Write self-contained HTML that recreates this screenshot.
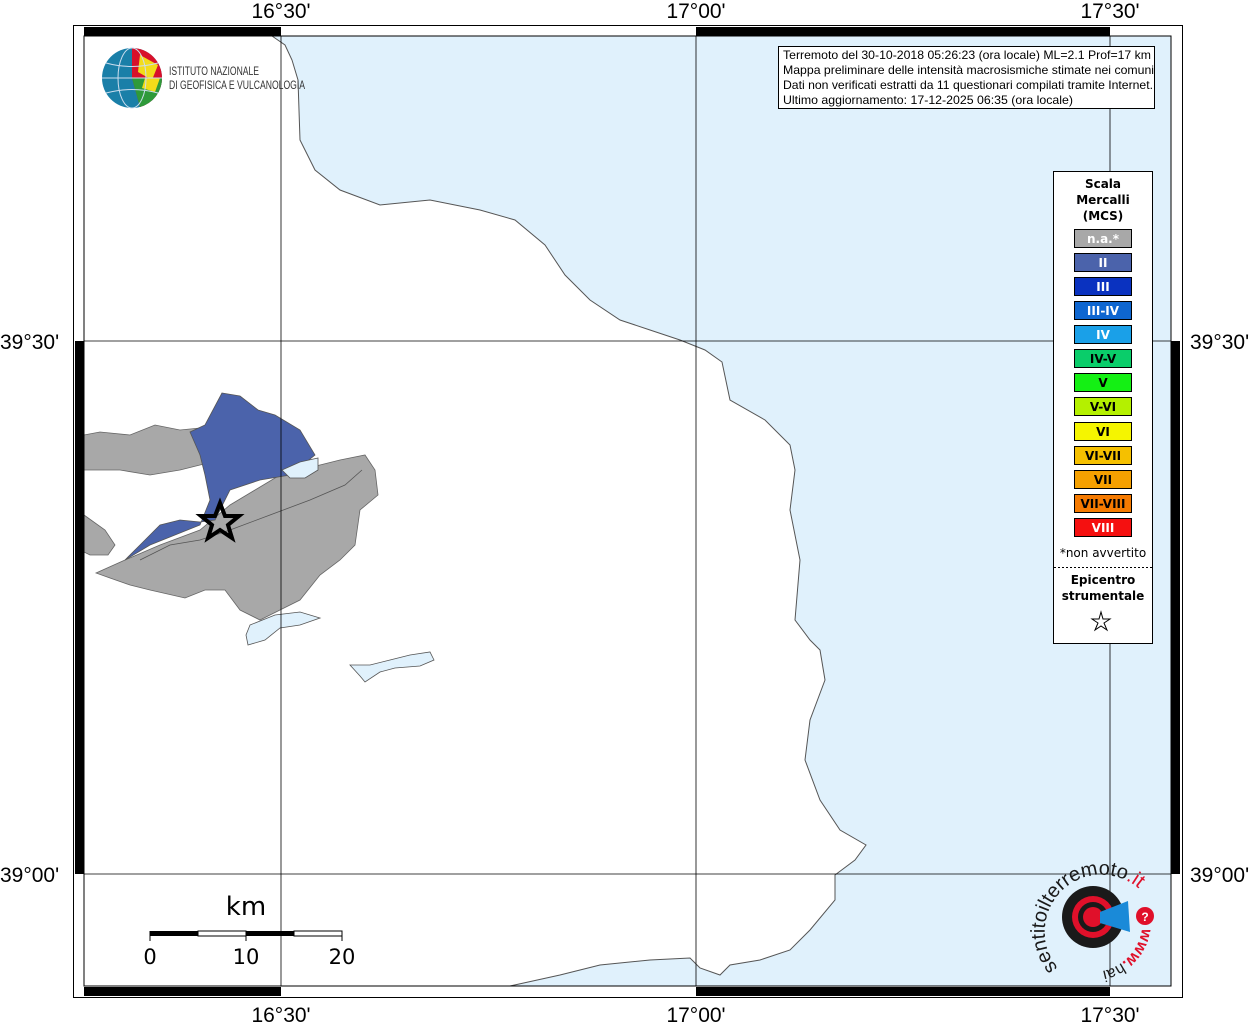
<!DOCTYPE html>
<html><head><meta charset="utf-8"><style>
body{margin:0;width:1255px;height:1024px;background:#fff;overflow:hidden;font-family:"Liberation Sans","DejaVu Sans",sans-serif}
svg{position:absolute;left:0;top:0}
.lbl{font-family:"Liberation Sans",sans-serif;font-size:21px;fill:#000}
.lg{font-family:"DejaVu Sans",sans-serif;font-size:12px;font-weight:bold;text-anchor:middle}
</style></head><body>
<svg width="1255" height="1024" viewBox="0 0 1255 1024">
<polygon fill="#e0f1fc" stroke="#555" stroke-width="1" points="272,36 285,45 292,60 298,80 300,140 315,170 340,190 380,205 430,200 480,210 515,220 545,245 565,275 590,300 620,320 650,330 680,340 705,350 722,362 730,400 765,420 790,445 795,470 790,510 800,560 795,620 810,640 820,650 825,680 810,720 805,760 820,800 840,830 866,845 855,860 835,875 835,900 810,930 790,950 760,960 730,965 720,975 700,968 690,958 650,960 600,965 560,975 510,986 1171,986 1171,36"/>
<g fill="#a8a8a8" stroke="#666" stroke-width="0.8">
<path d="M84,435 L100,432 130,435 155,425 180,430 200,428 220,460 180,470 150,475 120,470 84,470Z"/>
<path d="M84,515 L105,530 115,545 108,555 90,555 84,552Z"/>
<path d="M96,573 L125,560 160,545 200,530 230,505 280,475 340,460 365,455 375,470 378,495 360,510 355,545 340,560 320,575 300,600 280,610 260,620 240,610 225,590 205,590 185,598 150,590 130,585 110,578Z"/>
</g>
<path fill="#4b63ab" stroke="#555" stroke-width="0.8" d="M222,393 L240,396 258,410 275,415 300,430 315,455 290,475 260,480 230,490 215,520 200,522 180,520 160,525 140,545 125,560 150,545 200,525 210,500 205,475 200,455 190,432 205,425Z"/>
<path fill="#e0f1fc" stroke="#555" stroke-width="0.8" d="M282,470 L300,462 318,458 318,470 305,478 290,478Z"/>
<path fill="#e0f1fc" stroke="#555" stroke-width="0.8" d="M250,625 L275,615 300,612 320,618 300,625 280,628 265,640 248,645 246,635Z"/>
<path fill="#e0f1fc" stroke="#555" stroke-width="0.8" d="M350,665 L370,665 390,660 410,655 430,652 434,660 420,666 395,668 380,672 365,682 360,676Z"/>
<path fill="none" stroke="#555" stroke-width="0.8" d="M140,560 L170,545 200,540 230,530 270,515 310,500 345,485 362,470"/>
<polygon fill="none" stroke="#000" stroke-width="4" points="220,503 225,516 239,516 228,525 232,538 220,530 208,538 212,525 201,516 215,516"/>
<g stroke="#000" stroke-width="0.8">
<line x1="281" y1="36" x2="281" y2="986"/><line x1="696" y1="36" x2="696" y2="986"/><line x1="1110" y1="36" x2="1110" y2="986"/>
<line x1="84" y1="341" x2="1171" y2="341"/><line x1="84" y1="874" x2="1171" y2="874"/>
</g>
<rect x="73.5" y="25.5" width="1109" height="972" fill="none" stroke="#000"/>
<rect x="84" y="36" width="1087" height="950" fill="none" stroke="#000"/>
<g fill="#000">
<rect x="84" y="27" width="197" height="9"/><rect x="696" y="27" width="414" height="9"/>
<rect x="84" y="987" width="197" height="9"/><rect x="696" y="987" width="414" height="9"/>
<rect x="75" y="341" width="9" height="533"/><rect x="1171" y="341" width="9" height="533"/>
</g>
<g class="lbl">
<text x="281" y="18" text-anchor="middle">16°30'</text><text x="696" y="18" text-anchor="middle">17°00'</text><text x="1110" y="18" text-anchor="middle">17°30'</text>
<text x="281" y="1022" text-anchor="middle">16°30'</text><text x="696" y="1022" text-anchor="middle">17°00'</text><text x="1110" y="1022" text-anchor="middle">17°30'</text>
<text x="0" y="349">39°30'</text><text x="0" y="882">39°00'</text>
<text x="1190" y="349">39°30'</text><text x="1190" y="882">39°00'</text>
</g>
<circle cx="132" cy="78" r="30" fill="#1a7fa8"/>
<path d="M132,48 A30,30 0 0 1 162,78 A30,30 0 0 1 140,107 L132,78Z" fill="#d8102a"/>
<path d="M140,55 L158,65 152,80 138,72Z" fill="#f2dc1a"/>
<path d="M132,78 L162,78 A30,30 0 0 1 140,107Z" fill="#2e9a3a"/>
<path d="M145,78 L160,78 155,92 142,88Z" fill="#f2dc1a"/>
<g stroke="#cde" stroke-width="1" fill="none"><ellipse cx="132" cy="78" rx="14" ry="30"/><line x1="102" y1="78" x2="162" y2="78"/><path d="M106,63 Q132,70 158,63"/><path d="M106,93 Q132,86 158,93"/></g>
<text x="169" y="75" font-family="Liberation Sans Narrow,Liberation Sans,sans-serif" font-size="12" fill="#333" textLength="90" lengthAdjust="spacingAndGlyphs">ISTITUTO NAZIONALE</text>
<text x="169" y="89" font-family="Liberation Sans Narrow,Liberation Sans,sans-serif" font-size="12" fill="#333" textLength="136" lengthAdjust="spacingAndGlyphs">DI GEOFISICA E VULCANOLOGIA</text>
<rect x="778.5" y="46.5" width="376" height="62" fill="#fff" stroke="#000"/>
<g font-family="Liberation Sans,sans-serif" font-size="12" fill="#000" lengthAdjust="spacingAndGlyphs">
<text x="783" y="59" textLength="368" lengthAdjust="spacingAndGlyphs">Terremoto del 30-10-2018 05:26:23 (ora locale) ML=2.1 Prof=17 km</text>
<text x="783" y="74" textLength="371" lengthAdjust="spacingAndGlyphs">Mappa preliminare delle intensità macrosismiche stimate nei comuni</text>
<text x="783" y="89" textLength="370" lengthAdjust="spacingAndGlyphs">Dati non verificati estratti da 11 questionari compilati tramite Internet.</text>
<text x="783" y="104" textLength="290" lengthAdjust="spacingAndGlyphs">Ultimo aggiornamento: 17-12-2025 06:35 (ora locale)</text>
</g>
<rect x="1053.5" y="171.5" width="99" height="472" fill="#fff" stroke="#000"/>
<g class="lg"><text x="1103" y="188">Scala</text><text x="1103" y="204">Mercalli</text><text x="1103" y="220">(MCS)</text></g>
<g stroke="#000" stroke-width="1">
<rect x="1074.5" y="229.5" width="57" height="18" fill="#a8a8a8"/>
<rect x="1074.5" y="253.5" width="57" height="18" fill="#4b63ab"/>
<rect x="1074.5" y="277.5" width="57" height="18" fill="#0a32c0"/>
<rect x="1074.5" y="301.5" width="57" height="18" fill="#0e66d0"/>
<rect x="1074.5" y="325.5" width="57" height="18" fill="#1aa0e8"/>
<rect x="1074.5" y="349.5" width="57" height="18" fill="#0acd6a"/>
<rect x="1074.5" y="373.5" width="57" height="18" fill="#14f014"/>
<rect x="1074.5" y="397.5" width="57" height="18" fill="#b4f000"/>
<rect x="1074.5" y="422.5" width="57" height="18" fill="#f5f500"/>
<rect x="1074.5" y="446.5" width="57" height="18" fill="#f5c000"/>
<rect x="1074.5" y="470.5" width="57" height="18" fill="#f5a000"/>
<rect x="1074.5" y="494.5" width="57" height="18" fill="#f57a00"/>
<rect x="1074.5" y="518.5" width="57" height="18" fill="#f51010"/>
</g>
<g class="lg">
<text x="1103" y="243" fill="#fff">n.a.*</text><text x="1103" y="267" fill="#fff">II</text><text x="1103" y="291" fill="#fff">III</text>
<text x="1103" y="315" fill="#fff">III-IV</text><text x="1103" y="339" fill="#fff">IV</text><text x="1103" y="363">IV-V</text>
<text x="1103" y="387">V</text><text x="1103" y="411">V-VI</text><text x="1103" y="436">VI</text><text x="1103" y="460">VI-VII</text>
<text x="1103" y="484">VII</text><text x="1103" y="508">VII-VIII</text><text x="1103" y="532" fill="#fff">VIII</text>
</g>
<text x="1103" y="557" font-family="DejaVu Sans,sans-serif" font-size="12" text-anchor="middle">*non avvertito</text>
<line x1="1054" y1="567.5" x2="1152" y2="567.5" stroke="#000" stroke-dasharray="2,2"/>
<g class="lg"><text x="1103" y="584">Epicentro</text><text x="1103" y="600">strumentale</text></g>
<polygon fill="none" stroke="#000" stroke-width="1" points="1101,612 1103,619 1110,619 1104,623 1107,630 1101,626 1095,630 1098,623 1092,619 1099,619"/>
<text x="246" y="915" font-family="DejaVu Sans,sans-serif" font-size="26" text-anchor="middle">km</text>
<rect x="150" y="931" width="48" height="5" fill="#000"/><rect x="198" y="931" width="48" height="5" fill="#fff" stroke="#000"/>
<rect x="246" y="931" width="48" height="5" fill="#000"/><rect x="294" y="931" width="48" height="5" fill="#fff" stroke="#000"/>
<g stroke="#000"><line x1="150" y1="931" x2="150" y2="941"/><line x1="246" y1="931" x2="246" y2="941"/><line x1="342" y1="931" x2="342" y2="941"/></g>
<g font-family="DejaVu Sans,sans-serif" font-size="21" text-anchor="middle"><text x="150" y="964">0</text><text x="246" y="964">10</text><text x="342" y="964">20</text></g>
<circle cx="1093" cy="917" r="31" fill="#1a1a1a"/>
<circle cx="1093" cy="917" r="21" fill="#e0102a"/>
<circle cx="1093" cy="917" r="15" fill="#1a1a1a"/>
<circle cx="1093" cy="917" r="10" fill="#e0102a"/>
<polygon points="1100,912 1128,901 1130,932 1100,923" fill="#1a8ad8"/>
<circle cx="1145" cy="916" r="9" fill="#e0102a"/>
<text x="1145" y="921" font-size="12" font-weight="bold" fill="#fff" text-anchor="middle">?</text>
<defs><path id="arc" d="M1058,968 A50,50 0 1 1 1145,895"/><path id="arc2" d="M1142,928 A50,50 0 0 1 1090,972"/></defs>
<text font-family="Liberation Sans,sans-serif" font-size="20" fill="#1a1a1a"><textPath href="#arc">sentitoilterremoto<tspan fill="#e0102a">.it</tspan></textPath></text>
<text font-family="Liberation Sans,sans-serif" font-size="16" font-weight="bold" fill="#e0102a"><textPath href="#arc2">www.<tspan fill="#1a1a1a" font-weight="normal">hai</tspan></textPath></text>
</svg>
</body></html>
